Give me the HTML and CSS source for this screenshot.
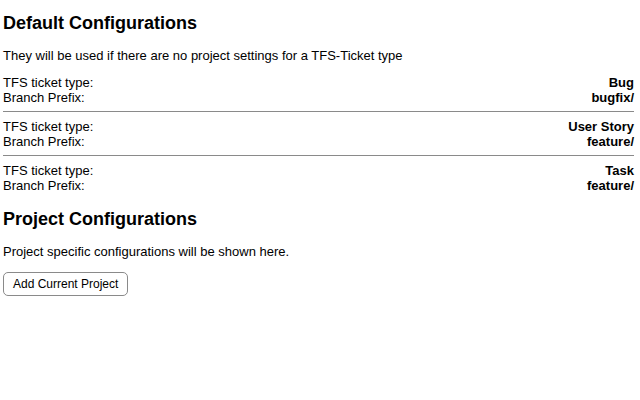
FILE: index.html
```html
<!DOCTYPE html>
<html lang="en">
<head>
    <meta charset="UTF-8">
    <title>Options</title>
    <link rel="stylesheet" href="styles.css">
</head>
<body>
    <!-- Default Configurations -->
    <h2 class="section-title">Default Configurations</h2>
    <p class="hint">They will be used if there are no project settings for a TFS-Ticket type</p>

    <div class="config-list">
        <div class="config">
            <div class="config-row"><span>TFS ticket type:</span><b>Bug</b></div>
            <div class="config-row"><span>Branch Prefix:</span><b>bugfix/</b></div>
        </div>
        <div class="config">
            <div class="config-row"><span>TFS ticket type:</span><b>User Story</b></div>
            <div class="config-row"><span>Branch Prefix:</span><b>feature/</b></div>
        </div>
        <div class="config">
            <div class="config-row"><span>TFS ticket type:</span><b>Task</b></div>
            <div class="config-row"><span>Branch Prefix:</span><b>feature/</b></div>
        </div>
    </div>

    <!-- Project Configurations -->
    <h2 class="section-title">Project Configurations</h2>
    <p class="hint hint-last">Project specific configurations will be shown here.</p>
    <button class="add-btn">Add Current Project</button>
</body>
</html>
```

FILE: styles.css
```css
body {
    font-family: "Liberation Sans", Arial, sans-serif;
    font-size: 13px;
    color: #000;
    margin: 0;
    padding: 12px 6px 0 3px;
}

.section-title {
    font-size: 18px;
    margin: 9px 0 0;
    line-height: 22px;
}

.section-title:first-child {
    margin-top: 0;
}

.hint {
    margin: 14px 0 12px;
    line-height: 15px;
}

.hint-last {
    margin-bottom: 13px;
}

.config {
    padding: 7px 0 6px;
    border-bottom: 1px solid #8a8a8a;
}

.config:first-child {
    padding-top: 0;
}

.config:last-child {
    border-bottom: none;
}

.config-row {
    display: flex;
    justify-content: space-between;
    line-height: 15px;
}

.add-btn {
    display: block;
    font-family: inherit;
    font-size: 12px;
    margin: 0;
    padding: 4px 9px;
    background: #fff;
    border: 1px solid #8a8a8a;
    border-radius: 5px;
    height: 24px;
}
```
